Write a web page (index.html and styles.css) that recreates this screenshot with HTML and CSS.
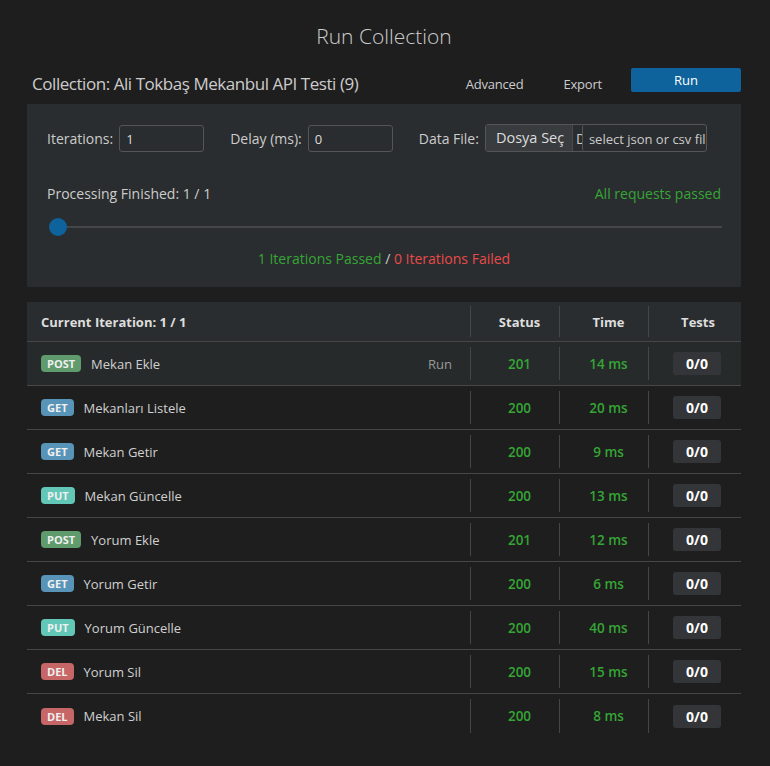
FILE: index.html
```html
<!DOCTYPE html>
<html>
<head>
<meta charset="utf-8">
<link rel="stylesheet" href="styles.css">
</head>
<body>
<div class="page">
  <h1 class="title">Run Collection</h1>
  <div class="head">
    <div class="coll">Collection: Ali Tokbaş Mekanbul API Testi (9)</div>
    <div class="actions">
      <span class="link">Advanced</span>
      <span class="link">Export</span>
      <button class="run">Run</button>
    </div>
  </div>
  <div class="panel">
    <div class="opts">
      <label class="lbl">Iterations:</label>
      <div class="inp w85">1</div>
      <label class="lbl ml">Delay (ms):</label>
      <div class="inp w85">0</div>
      <label class="lbl ml">Data File:</label>
      <div class="file">
        <span class="fbtn">Dosya Seç</span>
        <span class="fname">D</span>
        <span class="fph">select json or csv fil</span>
      </div>
    </div>
    <div class="prog">
      <span>Processing Finished: 1 / 1</span>
      <span class="green">All requests passed</span>
    </div>
    <div class="slider"><span class="thumb"></span><span class="track"></span></div>
    <div class="sum"><span class="green">1 Iterations Passed</span> / <span class="red">0 Iterations Failed</span></div>
  </div>
  <div class="table">
    <div class="row hdr">
      <div class="c name">Current Iteration: 1 / 1</div>
      <div class="c col">Status</div>
      <div class="c col">Time</div>
      <div class="c col tc">Tests</div>
    </div>
    <div class="row hl">
      <div class="c name"><span class="b post">POST</span><span class="rn">Mekan Ekle</span><span class="rrun">Run</span></div>
      <div class="c col g">201</div><div class="c col g">14 ms</div><div class="c col tc"><span class="t">0/0</span></div>
    </div>
    <div class="row">
      <div class="c name"><span class="b get">GET</span><span class="rn">Mekanları Listele</span></div>
      <div class="c col g">200</div><div class="c col g">20 ms</div><div class="c col tc"><span class="t">0/0</span></div>
    </div>
    <div class="row">
      <div class="c name"><span class="b get">GET</span><span class="rn">Mekan Getir</span></div>
      <div class="c col g">200</div><div class="c col g">9 ms</div><div class="c col tc"><span class="t">0/0</span></div>
    </div>
    <div class="row">
      <div class="c name"><span class="b put">PUT</span><span class="rn">Mekan Güncelle</span></div>
      <div class="c col g">200</div><div class="c col g">13 ms</div><div class="c col tc"><span class="t">0/0</span></div>
    </div>
    <div class="row">
      <div class="c name"><span class="b post">POST</span><span class="rn">Yorum Ekle</span></div>
      <div class="c col g">201</div><div class="c col g">12 ms</div><div class="c col tc"><span class="t">0/0</span></div>
    </div>
    <div class="row">
      <div class="c name"><span class="b get">GET</span><span class="rn">Yorum Getir</span></div>
      <div class="c col g">200</div><div class="c col g">6 ms</div><div class="c col tc"><span class="t">0/0</span></div>
    </div>
    <div class="row">
      <div class="c name"><span class="b put">PUT</span><span class="rn">Yorum Güncelle</span></div>
      <div class="c col g">200</div><div class="c col g">40 ms</div><div class="c col tc"><span class="t">0/0</span></div>
    </div>
    <div class="row">
      <div class="c name"><span class="b del">DEL</span><span class="rn">Yorum Sil</span></div>
      <div class="c col g">200</div><div class="c col g">15 ms</div><div class="c col tc"><span class="t">0/0</span></div>
    </div>
    <div class="row last">
      <div class="c name"><span class="b del">DEL</span><span class="rn">Mekan Sil</span></div>
      <div class="c col g">200</div><div class="c col g">8 ms</div><div class="c col tc"><span class="t">0/0</span></div>
    </div>
  </div>
</div>
</body>
</html>
```
FILE: styles.css
```css
* { box-sizing: border-box; }
html, body { margin: 0; background: #1e1e1e; }
body { font-family: "Open Sans", "Noto Sans", sans-serif; color: #cccccc; width: 770px; height: 766px; overflow: hidden; }
.page { padding: 0 29px 0 27px; }
.title { margin: 0; padding-top: 21px; height: 64px; text-align: center; font-weight: 300; font-size: 21px; color: #cccccc; line-height: 30px; }
.head { display: flex; align-items: center; justify-content: space-between; height: 40px; padding-left: 5px; }
.coll { font-size: 17px; font-weight: 400; color: #cccccc; letter-spacing: -0.45px; margin-top: -2px; }
.actions { display: flex; align-items: center; }
.link { font-size: 13px; color: #cccccc; margin-right: 40px; padding-top: 0; letter-spacing: -0.2px; }
.link:first-child { margin-left: 3px; }
.link + .link { margin-right: 29px; }
.run { width: 110px; height: 24px; background: #0e639c; color: #fff; border: none; border-radius: 2px; font-family: inherit; font-size: 13px; padding: 0; margin-top: -8px; }
.panel { background: #2a2d2f; height: 183px; padding: 20px 20px 0 20px; margin-top: 0; }
.opts { display: flex; align-items: center; height: 28px; }
.lbl { font-size: 14px; color: #cccccc; margin-right: 6px; }
.ml { margin-left: 26px; }
.inp { height: 27px; border: 1px solid #555; border-radius: 3px; font-size: 13px; padding: 5px 6px; color: #ddd; line-height: 16px; }
.w85 { width: 85px; }
.file { display: flex; width: 222px; height: 28px; border: 1px solid #555; border-radius: 3px; overflow: hidden; }
.fbtn { flex: none; width: 87px; background: #393c3f; font-size: 14.5px; color: #ddd; padding: 3px 0 0 10px; border-right: 1px solid #4a4a4a; white-space: nowrap; }
.fname { flex: none; width: 6px; overflow: hidden; white-space: nowrap; font-size: 14px; padding-top: 4px; margin-left: 3px; color: #ccc; }
.fph { flex: 1; border-left: 1px solid #555; border-radius: 3px; font-size: 13px; white-space: nowrap; overflow: hidden; padding: 5px 0 0 6px; color: #ccc; }
.prog { display: flex; justify-content: space-between; margin-top: 31px; font-size: 14px; height: 22px; line-height: 22px; }
.green { color: #35a535; }
.red { color: #e84a4a; }
.slider { display: flex; align-items: center; margin-top: 13px; height: 18px; margin-left: 2px; }
.thumb { flex: none; width: 18px; height: 18px; border-radius: 50%; background: #0e639c; }
.track { flex: none; width: 655px; height: 2px; background: #444648; }
.sum { text-align: center; font-size: 14px; margin-top: 13px; color: #ccc; }
.table { margin-top: 15px; }
.row { display: grid; grid-template-columns: 443px 89px 89px 93px; height: 44px; padding: 5px 0; border-bottom: 1px solid #464646; align-items: stretch; }
.row.last { border-bottom: none; }
.hdr { background: #2a2d2f; height: 40px; padding: 4px 0 4px; }
.hl { background: #262a2b; }
.c { display: flex; align-items: center; font-size: 13px; }
.name { padding-left: 14px; padding-right: 18px; }
.col { justify-content: center; border-left: 1px solid #464646; padding-left: 9px; }
.col.tc { padding-left: 4px; }
.hdr .c { font-weight: 700; color: #dddddd; }
.hdr .col { padding-left: 9px; }
.hdr .col.tc { padding-left: 6px; }
.g { color: #35a535; font-weight: 600; font-size: 13.5px; }
.b { display: inline-block; height: 17px; line-height: 17px; padding: 0 6px; border-radius: 4px; font-size: 11px; font-weight: 700; color: #f0f0f0; margin-right: 10px; }
.post { background: #5f9b6c; }
.get { background: #5893b8; }
.put { background: #63c7b7; }
.del { background: #c66666; }
.rn { color: #d0d0d0; }
.rrun { margin-left: auto; color: #999; }
.t { display: inline-block; width: 48px; height: 23px; line-height: 23px; text-align: center; background: #333538; border-radius: 3px; color: #fff; font-weight: 700; font-size: 14px; }
```
